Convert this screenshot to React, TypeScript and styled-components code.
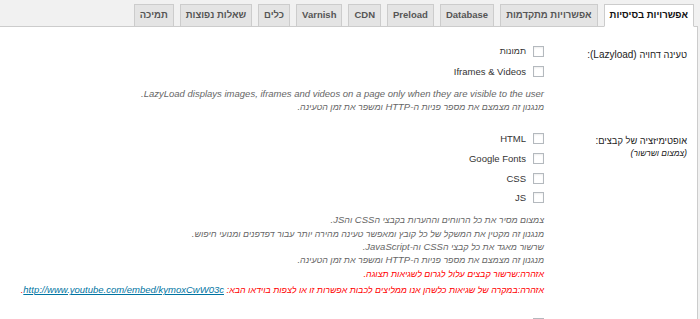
import React from "react";
import styled, { createGlobalStyle } from "styled-components";

const GlobalStyle = createGlobalStyle`
  html, body {
    margin: 0;
    padding: 0;
    background: #f1f1f1;
    overflow: hidden;
  }
  body {
    font-family: "Liberation Sans", Arial, "DejaVu Sans", sans-serif;
  }
`;

const Page = styled.div`
  margin-right: 2px;
  min-height: 100vh;
`;

const TabBar = styled.div`
  display: flex;
  gap: 6px;
  padding: 4px 4px 0 0;
  border-bottom: 1px solid #cccccc;
`;

const Tab = styled.a<{ $active?: boolean }>`
  display: block;
  margin-bottom: -1px;
  padding: 0 5px 1px;
  line-height: 20px;
  font-size: 9.5px;
  font-weight: bold;
  white-space: nowrap;
  color: ${({ $active }) => ($active ? "#111" : "#555")};
  background: ${({ $active }) => ($active ? "#ffffff" : "#e4e4e4")};
  border: 1px solid #cccccc;
  border-bottom-color: ${({ $active }) => ($active ? "#ffffff" : "#cccccc")};
  cursor: pointer;
`;

const Panel = styled.div`
  background: #ffffff;
  border-right: 1px solid #cccccc;
  padding: 0 10px 40px 0;
  min-height: 400px;
`;

const Row = styled.div`
  display: grid;
  grid-template-columns: 143px 1fr;
  padding: 15px 0 0.5px;
`;

const Label = styled.div`
  padding-top: 5.5px;
  font-size: 10px;
  line-height: 13px;
  color: #222;
`;

const Hint = styled.em`
  display: block;
  font-size: 9px;
  color: #222;
`;

const Controls = styled.div`
  display: flex;
  flex-direction: column;
  align-items: flex-start;
`;

const Option = styled.label`
  display: flex;
  align-items: center;
  gap: 7px;
  height: 19.7px;
  font-size: 9.5px;
  color: #333;
`;

const Check = styled.input`
  appearance: none;
  margin: 0;
  width: 11px;
  height: 11px;
  border: 1px solid #b4b9be;
  background: #fff;
  box-shadow: inset 0 1px 2px rgba(0, 0, 0, 0.07);
`;

const Notes = styled.div`
  margin-top: 5.5px;
`;

const Note = styled.p`
  margin: 0;
  font-size: 9.5px;
  line-height: 13.3px;
  font-style: italic;
  color: #666;
  white-space: nowrap;
`;

const Warning = styled.p`
  margin: 0;
  font-size: 9.5px;
  line-height: 16px;
  font-style: italic;
  color: #ff0000;
  white-space: nowrap;
`;

const VideoLink = styled.a`
  color: #0074a2;
  text-decoration: underline;
`;

// Hebrew glyphs come out wider than in the original font, so they get a smaller size
const He = styled.span`
  font-size: 0.93em;
  line-height: 1;
`;

const hebrewRun = /([\u0590-\u05FF]+(?:[\s\-:,.()]+[\u0590-\u05FF]+)*)/g;

function Bi({ text }: { text: string }) {
  return (
    <>
      {text.split(hebrewRun).map((part, i) =>
        i % 2 === 1 ? <He key={i}>{part}</He> : part
      )}
    </>
  );
}

const tabs = [
  "אפשרויות בסיסיות",
  "אפשרויות מתקדמות",
  "Database",
  "Preload",
  "CDN",
  "Varnish",
  "כלים",
  "שאלות נפוצות",
  "תמיכה",
];

interface Warn {
  text: string;
  link?: string;
}

interface Setting {
  label: string;
  hint?: string;
  options: string[];
  notes?: string[];
  warnings?: Warn[];
}

const settings: Setting[] = [
  {
    label: "טעינה דחויה (Lazyload):",
    options: ["תמונות", "Iframes & Videos"],
    notes: [
      "LazyLoad displays images, iframes and videos on a page only when they are visible to the user.",
      "מנגנון זה מצמצם את מספר פניות ה-HTTP ומשפר את זמן הטעינה.",
    ],
  },
  {
    label: "אופטימיזציה של קבצים:",
    hint: "(צמצום ושרשור)",
    options: ["HTML", "Google Fonts", "CSS", "JS"],
    notes: [
      "צמצום מסיר את כל הרווחים וההערות בקבצי הCSS והJS.",
      "מנגנון זה מקטין את המשקל של כל קובץ ומאפשר טעינה מהירה יותר עבור דפדפנים ומנועי חיפוש.",
      "שרשור מאגד את כל קבצי הCSS וה-JavaScript.",
      "מנגנון זה מצמצם את מספר פניות ה-HTTP ומשפר את זמן הטעינה.",
    ],
    warnings: [
      { text: "אזהרה:שרשור קבצים עלול לגרום לשגיאות תצוגה." },
      {
        text: "אזהרה:במקרה של שגיאות כלשהן אנו ממליצים לכבות אפשרות זו או לצפות בוידאו הבא:",
        link: "http://www.youtube.com/embed/kymoxCwW03c",
      },
    ],
  },
  {
    label: "",
    options: [""],
  },
];

export default function App() {
  return (
    <Page dir="rtl">
      <GlobalStyle />
      <TabBar>
        {tabs.map((t, i) => (
          <Tab key={t} $active={i === 0}>
            {t}
          </Tab>
        ))}
      </TabBar>
      <Panel>
        {settings.map((s, i) => (
          <Row key={i}>
            <Label>
              <Bi text={s.label} />
              {s.hint && (
                <Hint>
                  <Bi text={s.hint} />
                </Hint>
              )}
            </Label>
            <Controls>
              {s.options.map((o, j) => (
                <Option key={j}>
                  <Check type="checkbox" />
                  <Bi text={o} />
                </Option>
              ))}
              {s.notes && (
                <Notes>
                  {s.notes.map((n) => (
                    <Note key={n}>
                      <Bi text={n} />
                    </Note>
                  ))}
                </Notes>
              )}
              {s.warnings?.map((w) => (
                <Warning key={w.text}>
                  <Bi text={w.text} />
                  {w.link && (
                    <>
                      {" "}
                      <VideoLink href="#">{w.link}</VideoLink>.
                    </>
                  )}
                </Warning>
              ))}
            </Controls>
          </Row>
        ))}
      </Panel>
    </Page>
  );
}
